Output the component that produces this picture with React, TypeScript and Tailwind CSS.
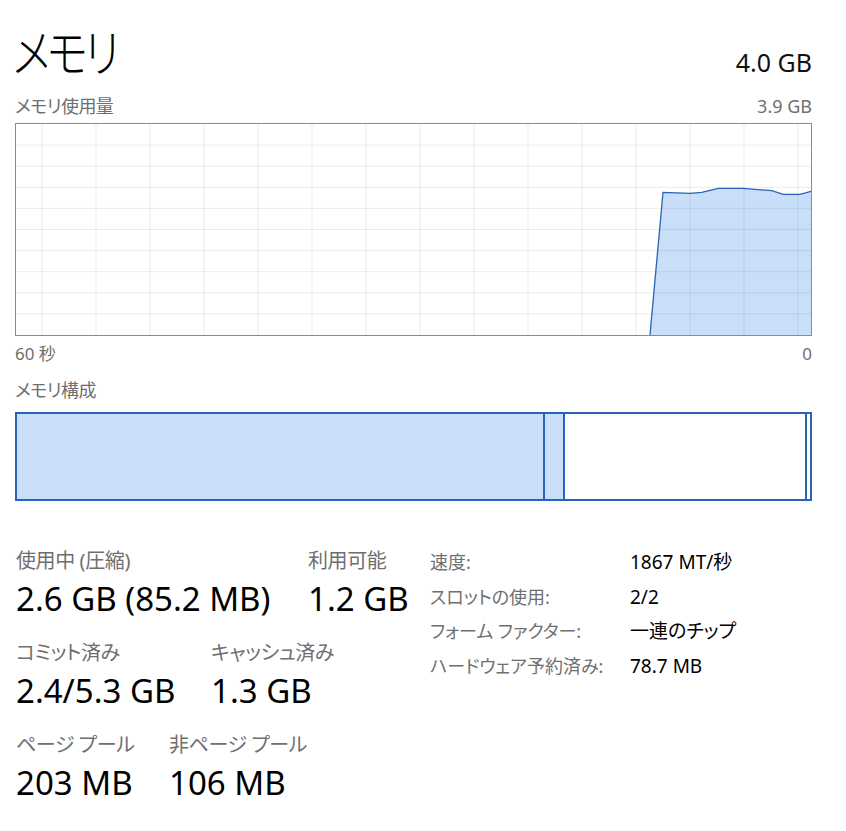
const font = "font-['Noto_Sans','Noto_Sans_CJK_JP',sans-serif] [font-feature-settings:'palt']";

const gridX = Array.from({ length: 15 }, (_, i) => 26 + i * 54);
const gridY = Array.from({ length: 9 }, (_, i) => (i + 1) * 21.1);

const usage: [number, number][] = [
  [634, 211],
  [647, 68.3],
  [674, 69.3],
  [685.7, 68.3],
  [702.3, 64.3],
  [727.3, 64.3],
  [755.7, 66.7],
  [767.3, 70.3],
  [784, 70.3],
  [795, 67.3],
];

const UsageGraph = () => {
  const line = usage.map(([x, y]) => `${x},${y}`).join(" ");
  const area = `${line} 795,211`;
  return (
    <div className="h-[213px] border border-[#8b8b8b] bg-white">
      <svg viewBox="0 0 795 211" className="block h-full w-full" preserveAspectRatio="none">
        <polygon points={area} fill="#c9dff9" />
        {gridX.map((x) => (
          <line key={`x${x}`} x1={x} y1={0} x2={x} y2={211} stroke="rgba(0,0,0,0.08)" strokeWidth={1} />
        ))}
        {gridY.map((y) => (
          <line key={`y${y}`} x1={0} y1={y} x2={795} y2={y} stroke="rgba(0,0,0,0.08)" strokeWidth={1} />
        ))}
        <polyline points={line} fill="none" stroke="#2a62b8" strokeWidth={1.3} />
      </svg>
    </div>
  );
};

const Stat = ({ label, value, w }: { label: string; value: string; w?: string }) => (
  <div className={`flex flex-col ${w ?? ""}`}>
    <span className="text-[20px] leading-[26px] tracking-[-0.02em] text-[#6f6f6f]">{label}</span>
    <span className="mt-[3px] text-[33px] leading-[44px] text-black">{value}</span>
  </div>
);

const details = [
  ["速度:", "1867 MT/秒"],
  ["スロットの使用:", "2/2"],
  ["フォーム ファクター:", "一連のチップ"],
  ["ハードウェア予約済み:", "78.7 MB"],
];

export default function App() {
  return (
    <div className={`min-h-screen bg-white pl-[15px] pr-[34px] pt-[22px] ${font}`}>
      <div className="flex items-baseline justify-between">
        <h1 className="-ml-[2px] inline-block origin-left scale-x-[0.84] text-[51px] font-light leading-[60px] tracking-[-0.08em] text-black">
          メモリ
        </h1>
        <span className="text-[25px] text-[#111]">4.0 GB</span>
      </div>

      <div className="mt-[12px] mb-[5px] flex justify-between text-[18px] leading-[24px] text-[#6f6f6f]">
        <span className="tracking-[-0.03em]">メモリ使用量</span>
        <span>3.9 GB</span>
      </div>
      <UsageGraph />
      <div className="mt-[6px] flex justify-between text-[17px] leading-[24px] text-[#6f6f6f]">
        <span>60 秒</span>
        <span>0</span>
      </div>

      <div className="mt-[12px] mb-[10px] text-[18px] leading-[24px] tracking-[-0.03em] text-[#6f6f6f]">メモリ構成</div>
      <div className="flex h-[89px] border-2 border-[#2a62b8]">
        <div className="w-[528px] border-r-2 border-[#2a62b8] bg-[#c9dff9]" />
        <div className="w-[20px] border-r-2 border-[#2a62b8] bg-[#c9dff9]" />
        <div className="flex-1 border-r-2 border-[#2a62b8] bg-white" />
        <div className="w-[3px] bg-white" />
      </div>

      <div className="mt-[47px] flex items-start pl-[1px]">
        <div className="flex w-[414px] flex-col gap-[19px]">
          <div className="flex">
            <Stat w="w-[292px]" label="使用中 (圧縮)" value="2.6 GB (85.2 MB)" />
            <Stat label="利用可能" value="1.2 GB" />
          </div>
          <div className="flex">
            <Stat w="w-[195px]" label="コミット済み" value="2.4/5.3 GB" />
            <Stat label="キャッシュ済み" value="1.3 GB" />
          </div>
          <div className="flex">
            <Stat w="w-[153px]" label="ページ プール" value="203 MB" />
            <Stat label="非ページ プール" value="106 MB" />
          </div>
        </div>
        <div className="-mt-[3px] grid grid-cols-[200px_auto] text-[18px] leading-[34.5px]">
          {details.map(([k, v]) => (
            <div key={k} className="contents">
              <span className="text-[#6f6f6f]">{k}</span>
              <span className="text-[19px] text-black">{v}</span>
            </div>
          ))}
        </div>
      </div>
    </div>
  );
}
